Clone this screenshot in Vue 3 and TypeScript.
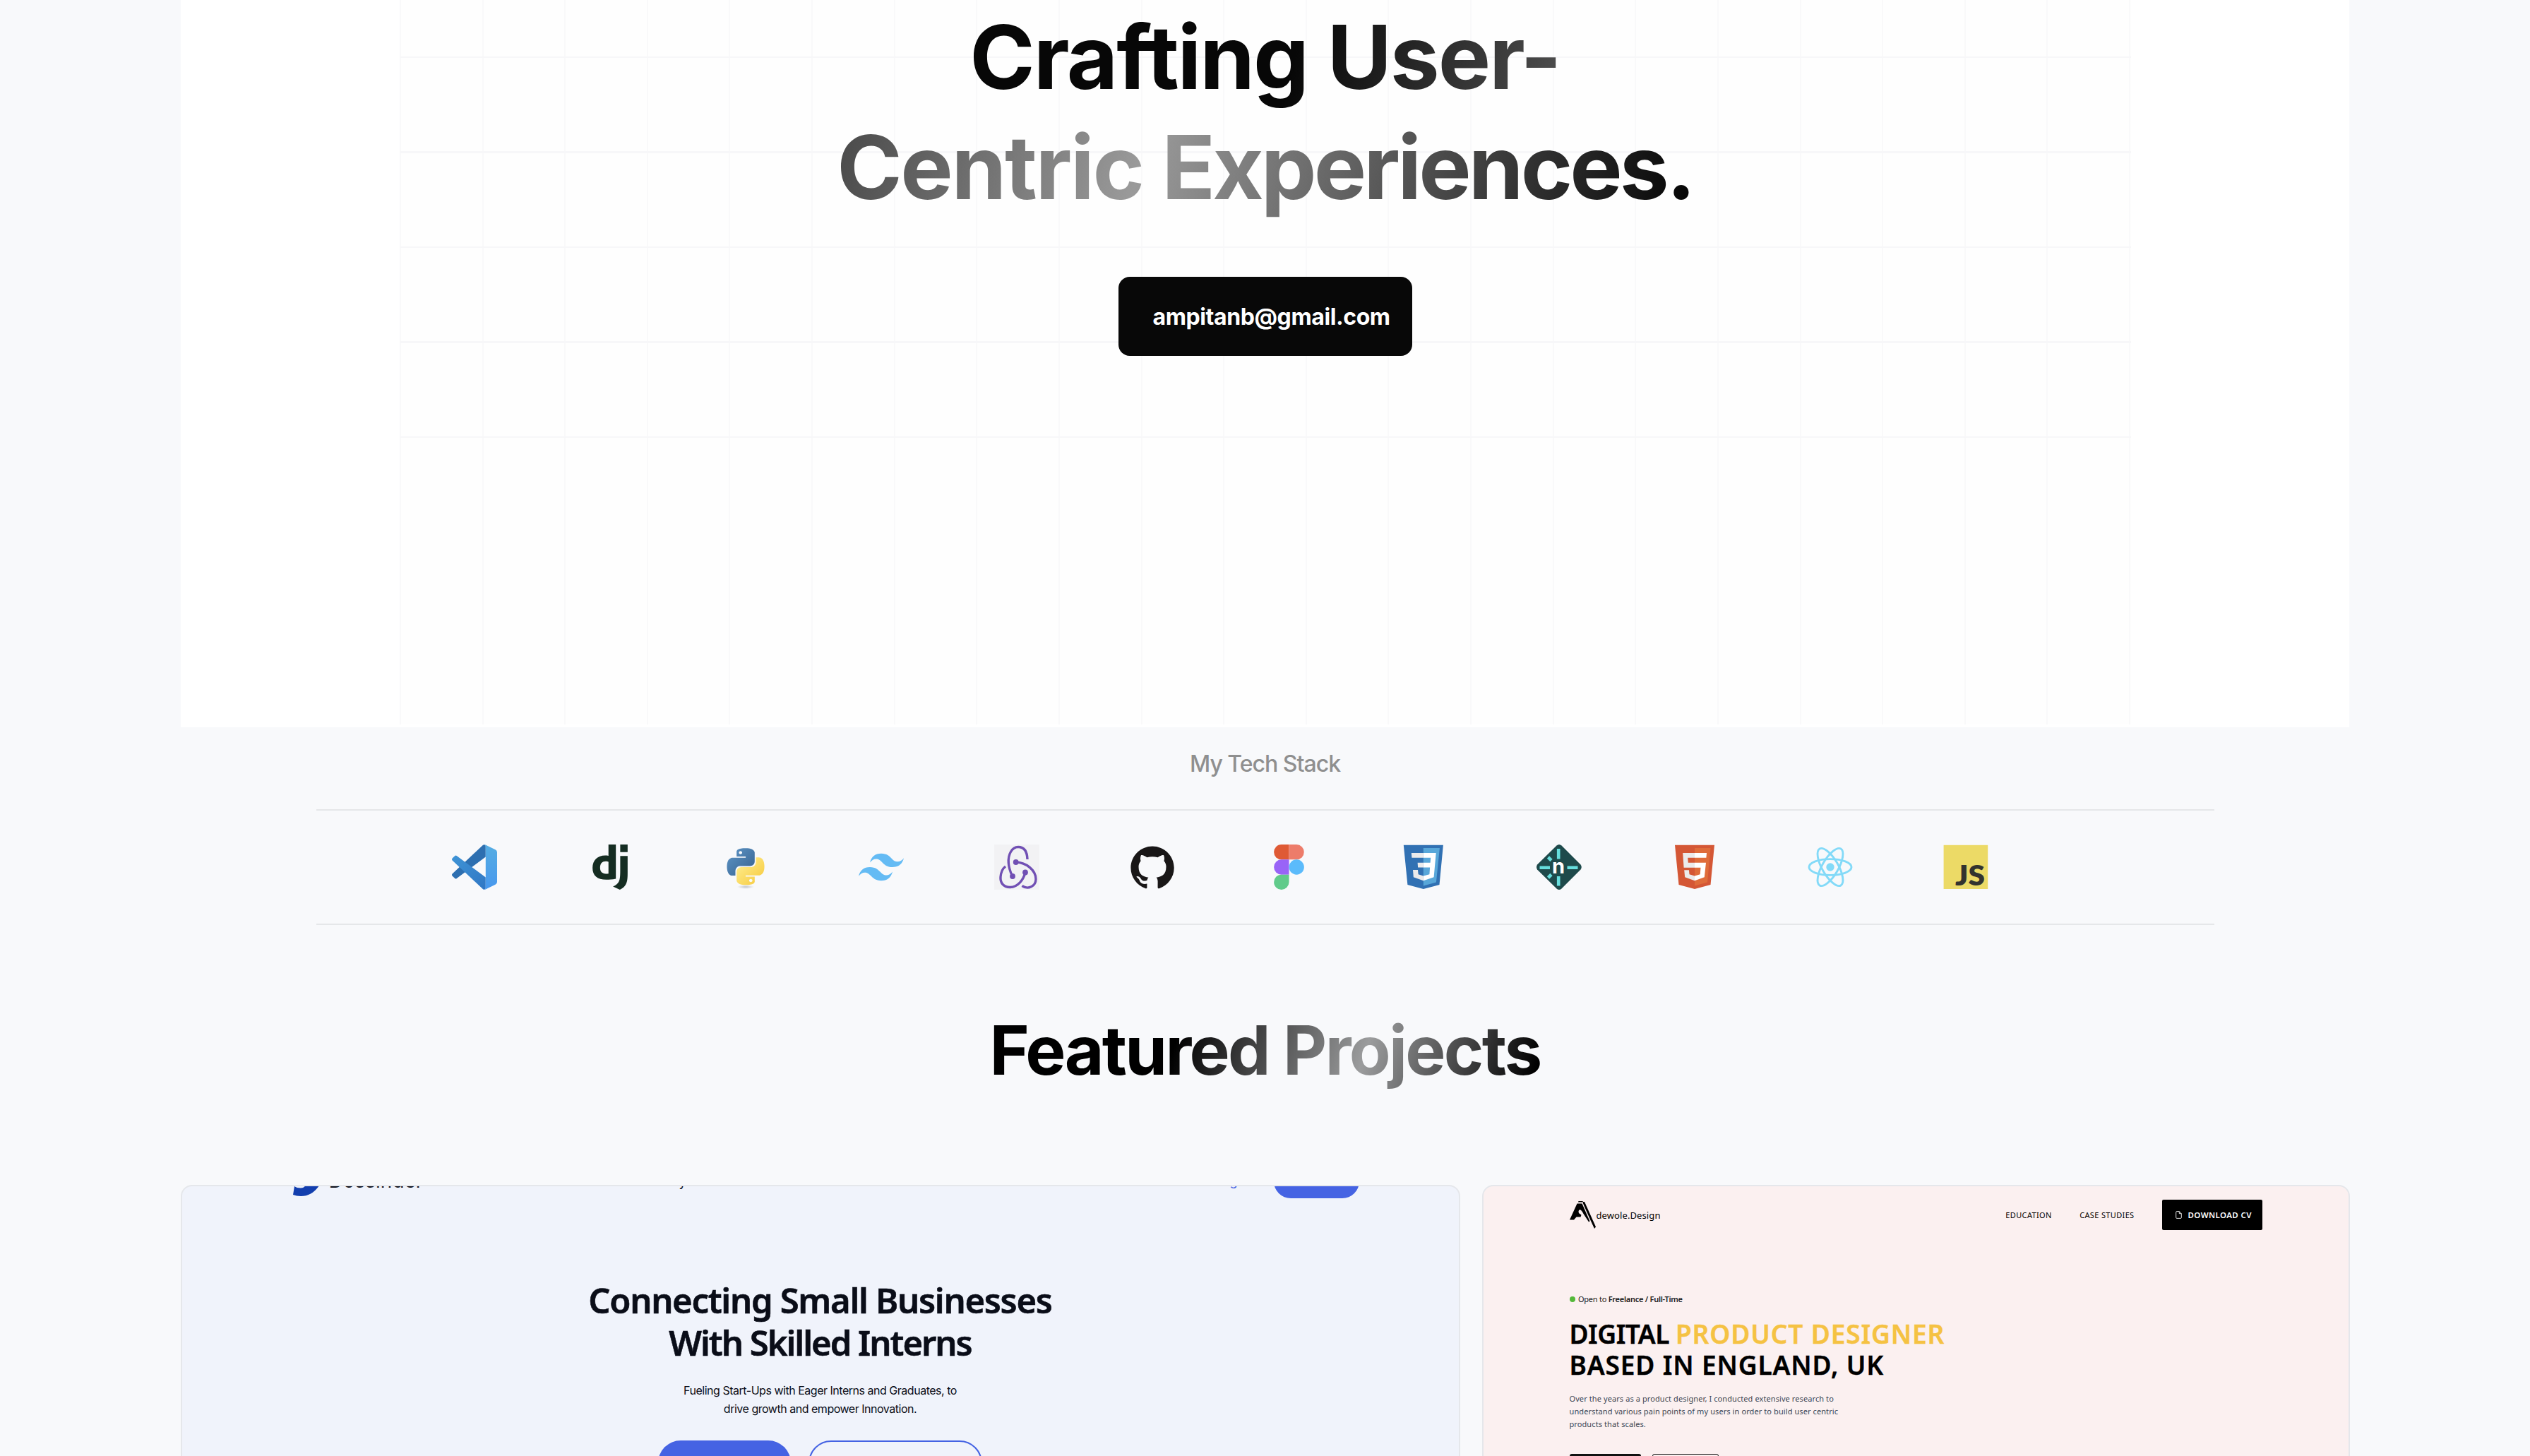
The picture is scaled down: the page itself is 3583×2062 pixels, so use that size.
<script setup lang="ts">
type StackId =
  | 'vscode' | 'django' | 'python' | 'tailwind' | 'redux' | 'github'
  | 'figma' | 'css' | 'netlify' | 'html' | 'react' | 'js'

const stack: { id: StackId; label: string }[] = [
  { id: 'vscode', label: 'Visual Studio Code' },
  { id: 'django', label: 'Django' },
  { id: 'python', label: 'Python' },
  { id: 'tailwind', label: 'Tailwind CSS' },
  { id: 'redux', label: 'Redux' },
  { id: 'github', label: 'GitHub' },
  { id: 'figma', label: 'Figma' },
  { id: 'css', label: 'CSS3' },
  { id: 'netlify', label: 'Netlify' },
  { id: 'html', label: 'HTML5' },
  { id: 'react', label: 'React' },
  { id: 'js', label: 'JavaScript' },
]
</script>

<template>
  <main class="page">
    <section class="hero">
      <div class="hero-grid">
        <h1 class="hero-title">
          <span class="shine"><span class="line-one">Crafting User-</span><br /><span class="word-one">Centric</span> <span class="word-two">Experiences.</span></span>
        </h1>
        <a class="mail">ampitanb@gmail.com</a>
      </div>
    </section>

    <section class="stack">
      <p class="stack-label">My Tech Stack</p>
      <div class="stack-row">
        <svg v-for="s in stack" :key="s.id" class="logo" viewBox="0 0 64 64" :aria-label="s.label">
          <template v-if="s.id === 'vscode'">
            <defs>
              <linearGradient id="vsPanel" x1="0" y1="0" x2="0" y2="1">
                <stop offset="0" stop-color="#55ade2" /><stop offset="1" stop-color="#4898ee" />
              </linearGradient>
              <linearGradient id="vsArm" x1="0" y1="0" x2="1" y2="1">
                <stop offset="0" stop-color="#3f94d6" /><stop offset="1" stop-color="#3077c4" />
              </linearGradient>
            </defs>
            <path fill="#2d6fb0" d="M44 .8Q46 -.6 47.8 1.5V17.5L6.8 48Q5.5 49 4.3 48L.8 44.8Q-.8 43 .8 41.3Z" />
            <path fill="url(#vsArm)" d="M4.3 16Q5.5 15 6.8 16L47.8 46.5V62Q46.2 64.8 44 63.2L.8 22.8Q-.8 21 .8 19.2Z" />
            <path fill="url(#vsPanel)" d="M45.8 .4Q46.8 .2 47.6 .6L61.5 7.2Q64 8.4 64 11V53Q64 55.6 61.5 56.8L47.6 63.4Q46.6 63.9 45.6 63.6Q47.8 63.4 47.8 61V3Q47.8 .8 45.8 .4Z" />
          </template>
          <g v-else-if="s.id === 'django'" fill="#152d22" transform="scale(2.6667)">
            <path d="M11.146 0h3.924v18.166c-2.013.382-3.491.535-5.096.535-4.791 0-7.288-2.166-7.288-6.32 0-4.002 2.65-6.6 6.753-6.6.637 0 1.121.05 1.707.203zm0 9.143a3.894 3.894 0 00-1.325-.204c-1.988 0-3.134 1.223-3.134 3.365 0 2.09 1.096 3.236 3.109 3.236.433 0 .79-.025 1.35-.102V9.142zM21.314 6.06v9.098c0 3.134-.229 4.638-.917 5.937-.637 1.249-1.478 2.039-3.211 2.905l-3.644-1.733c1.733-.815 2.574-1.53 3.109-2.625.561-1.121.739-2.421.739-5.835V6.059h3.924zM17.39.021h3.924v4.026H17.39z" />
          </g>
          <template v-else-if="s.id === 'python'">
            <defs>
              <linearGradient id="pyBlue" x1="0" y1="0" x2="1" y2="1">
                <stop offset="0" stop-color="#5e96c8" /><stop offset="1" stop-color="#36618e" />
              </linearGradient>
              <linearGradient id="pyYellow" x1="0" y1="0" x2="1" y2="1">
                <stop offset="0.2" stop-color="#fee984" /><stop offset="0.8" stop-color="#f8d04b" />
              </linearGradient>
              <radialGradient id="pyShade">
                <stop offset="0" stop-color="#c4c6c9" /><stop offset="1" stop-color="#c4c6c9" stop-opacity="0" />
              </radialGradient>
            </defs>
            <ellipse cx="32" cy="60" rx="12" ry="3" fill="url(#pyShade)" />
            <g transform="translate(5.6 5.2) scale(2.2 2.17)">
              <path fill="url(#pyBlue)" d="M14.25.18l.9.2.73.26.59.3.45.32.34.34.25.34.16.33.1.3.04.26.02.2-.01.13V8.5l-.05.63-.13.55-.21.46-.26.38-.3.31-.33.25-.35.19-.35.14-.33.1-.3.07-.26.04-.21.02H8.77l-.69.05-.59.14-.5.22-.41.27-.33.32-.27.35-.2.36-.15.37-.1.35-.07.32-.04.27-.02.21v3.06H3.17l-.21-.03-.28-.07-.32-.12-.35-.18-.36-.26-.36-.36-.35-.46-.32-.59-.28-.73-.21-.88-.14-1.05-.05-1.23.06-1.22.16-1.04.24-.87.32-.71.36-.57.4-.44.42-.33.42-.24.4-.16.36-.1.32-.05.24-.01h.16l.06.01h8.16v-.83H6.18l-.01-2.75-.02-.37.05-.34.11-.31.17-.28.25-.26.31-.23.38-.2.44-.18.51-.15.58-.12.64-.1.71-.06.77-.04.84-.02 1.27.05zm-6.3 1.98l-.23.33-.08.41.08.41.23.34.33.22.41.09.41-.09.33-.22.23-.34.08-.41-.08-.41-.23-.33-.33-.22-.41-.09-.41.09z" />
              <path fill="url(#pyYellow)" d="M21.04 6.11l.28.06.32.12.35.18.36.27.36.35.35.47.32.59.28.73.21.88.14 1.04.05 1.23-.06 1.23-.16 1.04-.24.86-.32.71-.36.57-.4.45-.42.33-.42.24-.4.16-.36.09-.32.05-.24.02-.16-.01h-8.22v.82h5.84l.01 2.76.02.36-.05.34-.11.31-.17.29-.25.25-.31.24-.38.2-.44.17-.51.15-.58.13-.64.09-.71.07-.77.04-.84.01-1.27-.04-1.07-.14-.9-.2-.73-.25-.59-.3-.45-.33-.34-.34-.25-.34-.16-.33-.1-.3-.04-.25-.02-.2.01-.13v-5.34l.05-.64.13-.54.21-.46.26-.38.3-.32.33-.24.35-.2.35-.14.33-.1.3-.06.26-.04.21-.02.13-.01h5.84l.69-.05.59-.14.5-.21.41-.28.33-.32.27-.35.2-.36.15-.36.1-.35.07-.32.04-.28.02-.21V6.07h2.09l.14.01zM14.57 20.36l-.23.33-.08.41.08.41.23.33.33.23.41.08.41-.08.33-.23.23-.33.08-.41-.08-.41-.23-.33-.33-.23-.41-.08-.41.08z" />
            </g>
          </template>
          <g v-else-if="s.id === 'tailwind'" fill="#64bbf4" transform="scale(2.6667)">
            <path d="M12 4.8c-3.2 0-5.2 1.6-6 4.8 1.2-1.6 2.6-2.2 4.2-1.8.913.228 1.565.89 2.288 1.624C13.666 10.618 15.027 12 18 12c3.2 0 5.2-1.6 6-4.8-1.2 1.6-2.6 2.2-4.2 1.8-.913-.228-1.565-.89-2.288-1.624C16.337 6.182 14.976 4.8 12 4.8zM6 12c-3.2 0-5.2 1.6-6 4.8 1.2-1.6 2.6-2.2 4.2-1.8.913.228 1.565.89 2.288 1.624C7.666 17.818 9.027 19.2 12 19.2c3.2 0 5.2-1.6 6-4.8-1.2 1.6-2.6 2.2-4.2 1.8-.913-.228-1.565-.89-2.288-1.624C10.337 13.382 8.976 12 6 12z" />
          </g>
          <template v-else-if="s.id === 'redux'">
            <rect width="64" height="64" fill="#f2f2f4" />
            <g fill="none" stroke="#7150b4" stroke-width="3.4">
              <path d="M47 21C46.6 9 41.500 3.500 34 3.500C25 3.500 19.500 14 20.300 26C20.700 33 22.500 38 25.500 44.500" />
              <path d="M31 25C45 25.500 59 36 59 49C59 59 48 64.500 39.500 58.500" />
              <path d="M44 40C41 50 34 60 22.500 60.500C12 60.500 8.500 53 9 46C9.500 39.500 12 34 16 31" />
            </g>
            <g fill="#7150b4">
              <circle cx="30.700" cy="25" r="3.900" /><circle cx="26" cy="45" r="3.900" /><circle cx="44" cy="39.500" r="3.900" />
            </g>
          </template>
          <g v-else-if="s.id === 'github'" fill="#191717" transform="translate(1.4 1.700) scale(2.555)">
            <path d="M12 .297c-6.63 0-12 5.373-12 12 0 5.303 3.438 9.8 8.205 11.385.6.113.82-.258.82-.577 0-.285-.01-1.04-.015-2.04-3.338.724-4.042-1.61-4.042-1.61C4.422 18.07 3.633 17.7 3.633 17.7c-1.087-.744.084-.729.084-.729 1.205.084 1.838 1.236 1.838 1.236 1.07 1.835 2.809 1.305 3.495.998.108-.776.417-1.305.76-1.605-2.665-.3-5.466-1.332-5.466-5.93 0-1.31.465-2.38 1.235-3.22-.135-.303-.54-1.523.105-3.176 0 0 1.005-.322 3.3 1.23.96-.267 1.98-.399 3-.405 1.02.006 2.04.138 3 .405 2.28-1.552 3.285-1.23 3.285-1.23.645 1.653.24 2.873.12 3.176.765.84 1.23 1.91 1.23 3.22 0 4.61-2.805 5.625-5.475 5.92.42.36.81 1.096.81 2.22 0 1.606-.015 2.896-.015 3.286 0 .315.21.69.825.57C20.565 22.092 24 17.592 24 12.297c0-6.627-5.373-12-12-12" />
          </g>
          <template v-else-if="s.id === 'figma'">
            <path fill="#df5a35" d="M33.500 0H22.700a10.667 10.667 0 0 0 0 21.333H33.500Z" />
            <path fill="#ed7c6a" d="M33.500 0H44.200a10.667 10.667 0 0 1 0 21.333H33.500Z" />
            <path fill="#9964f7" d="M33.500 21.333H22.700a10.667 10.667 0 0 0 0 21.333H33.500Z" />
            <circle fill="#5bbbfb" cx="44.200" cy="32" r="10.667" />
            <path fill="#61cb8b" d="M33.500 42.667H22.700a10.667 10.667 0 1 0 10.800 10.667Z" />
          </template>
          <template v-else-if="s.id === 'css'">
            <path fill="#3171b3" d="M3.800 .8H59.900L54.500 57L31.800 63L9.400 57Z" />
            <path fill="#58a7d9" d="M31.800 5H54.900L49.900 53.500L31.800 58.500Z" />
            <path fill="#ebebeb" d="M14.800 12H31.800V18.700H15.400ZM23.600 25.800H31.800V32.600H24.100ZM17 36H24L24.600 42.300L31.800 44.500V51.300L17.800 46.300Z" />
            <path fill="#fff" d="M31.800 12H49.700L46.600 46.300L31.800 51.300V44.500L40.400 42.300L41.100 32.600H31.800V25.800H41.600L42.200 18.700H31.800Z" />
          </template>
          <template v-else-if="s.id === 'netlify'">
            <path fill="#1e4a4b" d="M28.500 1.500Q32 -1.500 35.500 1.500L62.500 28.500Q65 32 62.500 35.500L35.500 62.500Q32 65.500 28.500 62.500L1 35.500Q-1 32 1 28.500Z" />
            <g stroke="#66dedd" stroke-width="4.600">
              <path d="M31.200 6V20.500M31.200 45V58.500M4.500 32.800H19M43.500 32.800H58.500M16.500 18L21 22.500M21 42.500L16.500 47" />
            </g>
            <text x="31" y="41" class="n-mark" text-anchor="middle">n</text>
          </template>
          <template v-else-if="s.id === 'html'">
            <path fill="#d45735" d="M4 .8H60L54.500 57L32 63L9.500 57Z" />
            <path fill="#df6c3a" d="M32 5H54.500L50 53.500L32 58.500Z" />
            <path fill="#ebebeb" d="M15.200 12H32V18.800H22.200L22.800 25.800H32V32.700H16.600ZM17.200 36.300H23.900L24.500 42.300L32 44.500V51.300L18.200 46.300Z" />
            <path fill="#fff" d="M32 12H49L48.400 18.800H32ZM32 25.800H48L45.800 46.300L32 51.300V44.500L39.700 42.300L40.500 32.700H32Z" />
          </template>
          <template v-else-if="s.id === 'react'">
            <g fill="none" stroke="#83daf8" stroke-width="2.900">
              <ellipse cx="32" cy="32" rx="30" ry="11.400" />
              <ellipse cx="32" cy="32" rx="30" ry="11.400" transform="rotate(60 32 32)" />
              <ellipse cx="32" cy="32" rx="30" ry="11.400" transform="rotate(120 32 32)" />
            </g>
            <circle cx="32" cy="32" r="5.700" fill="#83daf8" />
          </template>
          <template v-else>
            <rect x=".6" y=".8" width="62.600" height="62.200" fill="#ecda66" />
            <text x="17" y="57.800" class="js-mark" textLength="42" lengthAdjust="spacingAndGlyphs">JS</text>
          </template>
        </svg>
      </div>
    </section>

    <h2 class="featured"><span class="shine shine-featured">Featured Projects</span></h2>

    <section class="cards">
      <article class="card card-interns">
        <header class="interns-nav">
          <svg class="swoosh" viewBox="0 0 37 40"><path fill="#123eae" d="M2 26L0 38Q5 40 11 40Q27 40 37 25V8H22Q21 28.500 11 28.500Q5 28.500 2 26Z" /></svg>
          <span class="wordmark">Dossinder</span>
          <span class="industry">Industry</span>
          <span class="login">Login</span>
          <span class="nav-pill"></span>
        </header>
        <h3 class="interns-title">
          <span class="t1">Connecting Small Businesses</span>
          <span class="t2">With Skilled Interns</span>
        </h3>
        <p class="interns-copy">Fueling Start-Ups with Eager Interns and Graduates, to<br />drive growth and empower Innovation.</p>
        <div class="interns-actions"><span class="pill solid"></span><span class="pill outline"></span></div>
      </article>

      <article class="card card-design">
        <header class="design-nav">
          <svg class="a-mark" viewBox="0 0 37 39">
            <path d="M12.500 0H18.500L19 1.500H12ZM10.500 3.500H17.500L28.500 28.500L27 29.500L19.500 18Q16 11 13.500 12.500Q11.500 15 13.500 17.500L16.500 19.500L15.500 22.500H9.500L6 26.500H0Z" />
            <path d="M19 1H21L37 36.500L35 39L28.500 25L18.800 3Z" />
          </svg>
          <span class="brand">dewole.Design</span>
          <span class="link link-first">EDUCATION</span>
          <span class="link">CASE STUDIES</span>
          <span class="cv">
            <svg viewBox="0 0 9 11"><path d="M5.300 .6H1.800Q.7 .6 .7 1.700V9.300Q.7 10.400 1.800 10.400H7.200Q8.300 10.400 8.300 9.300V3.700ZM5.300 .8V3.700H8.200" fill="none" stroke="#fff" stroke-width=".9" /></svg>
            DOWNLOAD CV
          </span>
        </header>
        <p class="status"><i class="dot"></i><span>Open to <b>Freelance / Full-Time</b></span></p>
        <h3 class="design-title">
          <span class="digital">DIGITAL </span><em>PRODUCT DESIGNER</em><br />BASED IN ENGLAND, UK
        </h3>
        <p class="design-copy">
          Over the years as a product designer, I conducted extensive research to<br />
          understand various pain points of my users in order to build user centric<br />
          products that scales.
        </p>
        <div class="design-actions"><span class="box filled"></span><span class="box bordered"></span></div>
      </article>
    </section>
  </main>
</template>

<style>
body {
  margin: 0;
  background: #f8f9fb;
}
</style>

<style scoped>
.page {
  height: 2062px;
  overflow: hidden;
  background: #f8f9fb;
  font-family: Inter, "Liberation Sans", sans-serif;
  color: #000;
}

h1, h2, h3, p {
  margin: 0;
}

.hero {
  width: 3071px;
  height: 1030px;
  margin: 0 auto;
  background: #fff;
}

.hero-grid {
  box-sizing: border-box;
  width: 2452px;
  height: 1026px;
  margin: 0 auto;
  padding-top: 3px;
  display: flex;
  flex-direction: column;
  align-items: center;
  background:
    repeating-linear-gradient(to bottom, transparent -51.900px, transparent 80px, #f7f7f9 80px, #f7f7f9 82.500px, transparent 82.500px) 0 0 / 100% 622px no-repeat,
    repeating-linear-gradient(to right, #f9f9fa 0, #f9f9fa 2px, transparent 2px, transparent 116.620px),
    #fefefe;
}

.hero-title {
  font-size: 125px;
  line-height: 155.500px;
  font-weight: 700;
  letter-spacing: -3.300px;
  text-align: center;
}

.line-one {
  letter-spacing: -2.100px;
}

.word-one {
  letter-spacing: -2.300px;
}

.word-two {
  letter-spacing: -3.900px;
}

.shine {
  color: transparent;
  background: linear-gradient(105deg, #070707 23%, #9a9a9a 61.500%, #070707 99%);
  background-clip: text;
  -webkit-background-clip: text;
}

.shine-featured {
  background-image: linear-gradient(108deg, #000 34%, #9b9c9d 67.500%, #000 98%);
}

.mail {
  box-sizing: border-box;
  width: 416px;
  height: 112px;
  margin-top: 78px;
  padding-left: 49px;
  display: flex;
  align-items: center;
  border-radius: 16px;
  background: #080808;
  color: #fff;
  font-size: 32px;
  font-weight: 700;
  letter-spacing: -0.400px;
}

.stack {
  width: 2688px;
  margin: 0 auto;
  padding-top: 28px;
}

.stack-label {
  height: 48px;
  line-height: 48px;
  font-size: 32px;
  font-weight: 500;
  letter-spacing: -1px;
  text-align: center;
  color: #8f8f8f;
}

.stack-row {
  margin-top: 40px;
  padding: 48px 192px;
  display: flex;
  gap: 128px;
  border-top: 2px solid #e5e7e9;
  border-bottom: 2px solid #e5e7e9;
}

.logo {
  flex: none;
  width: 64px;
  height: 64px;
}

.n-mark {
  font: 700 29px Inter, sans-serif;
  fill: #fff;
}

.js-mark {
  font: 800 40px Lato, sans-serif;
  fill: #33332f;
}

.featured {
  margin-top: 129px;
  font-size: 96px;
  line-height: 96px;
  font-weight: 700;
  letter-spacing: -2.650px;
  text-align: center;
}

.cards {
  width: 3072px;
  margin: 143px auto 0;
  display: flex;
  gap: 31px;
}

.card {
  box-sizing: border-box;
  height: 800px;
  border: 2px solid #e5e7eb;
  border-radius: 16px;
  overflow: hidden;
}

.card-interns {
  width: 1812px;
  background: #f0f3fb;
  color: #0a0d18;
}

.interns-nav {
  height: 64px;
  margin-top: -47px;
  padding: 0 141px 0 157px;
  display: flex;
  align-items: flex-end;
}

.swoosh {
  width: 37px;
  height: 40px;
  margin-bottom: 3px;
}

.wordmark {
  width: 130px;
  margin-left: 14px;
  padding-bottom: 11.500px;
  font-size: 28px;
  line-height: 28px;
}

.industry {
  width: 100px;
  margin-left: 276px;
  padding-bottom: 14px;
  font-size: 18px;
  line-height: 18px;
  text-align: right;
}

.login {
  margin-left: auto;
  padding-bottom: 15px;
  font-size: 18px;
  line-height: 18px;
  color: #4563e3;
}

.nav-pill {
  width: 121px;
  height: 48px;
  margin-left: 36px;
  border-radius: 24px;
  background: #4563e3;
}

.interns-title {
  margin-top: 113.500px;
  font: 600 49px/60.500px "Noto Sans", sans-serif;
  text-align: center;
  -webkit-text-stroke: 0.600px #0a0d18;
}

.interns-title span {
  display: block;
}

.t1 {
  letter-spacing: -1.300px;
}

.t2 {
  letter-spacing: -2px;
}

.interns-copy {
  margin-top: 25.500px;
  font-size: 16px;
  line-height: 25.700px;
  letter-spacing: -0.480px;
  text-align: center;
}

.interns-actions {
  margin-top: 32px;
  display: flex;
  justify-content: center;
  gap: 25px;
}

.pill {
  box-sizing: border-box;
  height: 64px;
  border-radius: 32px;
}

.solid {
  width: 188px;
  background: #4563e3;
}

.outline {
  width: 246px;
  border: 2px solid #4563e3;
}

.card-design {
  width: 1229px;
  padding: 19px 122px 0;
  background: #fbf0f0;
  font-family: "Noto Sans", sans-serif;
}

.design-nav {
  height: 43px;
  display: flex;
  align-items: center;
}

.a-mark {
  width: 37px;
  height: 39px;
}

.brand {
  margin-left: 1px;
  font-size: 13px;
  letter-spacing: 0.100px;
}

.link {
  margin-left: 39.500px;
  font-size: 11px;
  letter-spacing: 0.350px;
}

.link-first {
  margin-left: auto;
}

.cv {
  box-sizing: border-box;
  width: 141.500px;
  height: 43px;
  margin-left: 39.500px;
  padding-left: 19px;
  display: flex;
  align-items: center;
  gap: 8.500px;
  border-radius: 2px;
  background: #000;
  color: #fff;
  font-size: 11.500px;
  font-weight: 600;
  letter-spacing: 0.400px;
  white-space: nowrap;
}

.cv svg {
  width: 9px;
  height: 11px;
}

.status {
  margin-top: 89.700px;
  display: flex;
  align-items: center;
  gap: 4.500px;
  font-size: 11px;
  line-height: 16px;
  letter-spacing: -0.260px;
  color: #222;
}

.status b {
  font-weight: 600;
}

.dot {
  width: 8px;
  height: 8px;
  border-radius: 50%;
  background: #55b83a;
}

.design-title {
  margin-top: 19.600px;
  font-size: 37px;
  line-height: 44px;
  font-weight: 600;
  letter-spacing: 0.880px;
  white-space: nowrap;
  -webkit-text-stroke: 0.400px currentColor;
}

.digital {
  letter-spacing: -0.500px;
  white-space: pre;
}

.design-title em {
  font-style: normal;
  color: #f5c243;
}

.design-copy {
  margin-top: 16.400px;
  font-size: 11px;
  line-height: 18px;
  letter-spacing: 0.090px;
  color: #3b4654;
}

.design-actions {
  margin-top: 33px;
  display: flex;
  gap: 16px;
}

.box {
  box-sizing: border-box;
  height: 40px;
  border-radius: 3px;
}

.filled {
  width: 101px;
  background: #111;
}

.bordered {
  width: 94px;
  border: 1px solid #111;
}
</style>
